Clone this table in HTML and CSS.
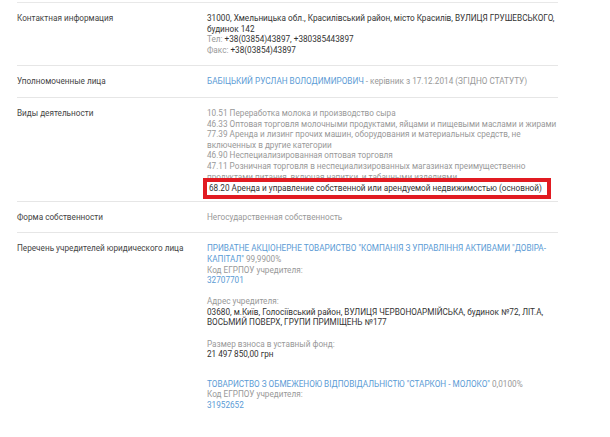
FILE: index.html
```html
<!DOCTYPE html>
<html lang="ru">
<head>
    <meta charset="UTF-8">
    <title>Информация о предприятии</title>
    <link rel="stylesheet" href="styles.css">
</head>
<body>
    <div class="info-table">
        <div class="info-row">
            <div class="info-label">Контактная информация</div>
            <div class="info-value">
                <div class="dark">31000, Хмельницька обл., Красилівський район, місто Красилів, ВУЛИЦЯ ГРУШЕВСЬКОГО, будинок 142</div>
                <div><span class="muted">Тел:</span> <span class="dark">+38(03854)43897, +380385443897</span></div>
                <div><span class="muted">Факс:</span> <span class="dark">+38(03854)43897</span></div>
            </div>
        </div>

        <div class="info-row">
            <div class="info-label">Уполномоченные лица</div>
            <div class="info-value">
                <a class="link" href="#">БАБІЦЬКИЙ РУСЛАН ВОЛОДИМИРОВИЧ</a> <span class="muted">- керівник з 17.12.2014 (ЗГІДНО СТАТУТУ)</span>
            </div>
        </div>

        <div class="info-row activities">
            <div class="info-label">Виды деятельности</div>
            <div class="info-value muted">
                <div>10.51 Переработка молока и производство сыра</div>
                <div>46.33 Оптовая торговля молочными продуктами, яйцами и пищевыми маслами и жирами</div>
                <div>77.39 Аренда и лизинг прочих машин, оборудования и материальных средств, не включенных в другие категории</div>
                <div>46.90 Неспециализированная оптовая торговля</div>
                <div>47.11 Розничная торговля в неспециализированных магазинах преимущественно продуктами питания, включая напитки, и табачными изделиями</div>
                <div class="main-activity">68.20 Аренда и управление собственной или арендуемой недвижимостью (основной)</div>
            </div>
        </div>

        <div class="info-row">
            <div class="info-label">Форма собственности</div>
            <div class="info-value muted">Негосударственная собственность</div>
        </div>

        <div class="info-row">
            <div class="info-label">Перечень учредителей юридического лица</div>
            <div class="info-value">
                <div class="founder">
                    <p><a class="link" href="#">ПРИВАТНЕ АКЦІОНЕРНЕ ТОВАРИСТВО "КОМПАНІЯ З УПРАВЛІННЯ АКТИВАМИ "ДОВІРА-КАПІТАЛ"</a> <span class="muted">99,9900%</span><br>
                    <span class="muted">Код ЕГРПОУ учредителя:</span><br>
                    <a class="link" href="#">32707701</a></p>
                    <p><span class="muted">Адрес учредителя:</span><br>
                    <span class="dark">03680, м.Київ, Голосіївський район, ВУЛИЦЯ ЧЕРВОНОАРМІЙСЬКА, будинок №72, ЛІТ.А, ВОСЬМИЙ ПОВЕРХ, ГРУПИ ПРИМІЩЕНЬ №177</span></p>
                    <p><span class="muted">Размер взноса в уставный фонд:</span><br>
                    <span class="dark">21 497 850,00 грн</span></p>
                </div>
                <div class="founder">
                    <p><a class="link" href="#">ТОВАРИСТВО З ОБМЕЖЕНОЮ ВІДПОВІДАЛЬНІСТЮ "СТАРКОН - МОЛОКО"</a> <span class="muted">0,0100%</span><br>
                    <span class="muted">Код ЕГРПОУ учредителя:</span><br>
                    <a class="link" href="#">31952652</a></p>
                </div>
            </div>
        </div>
    </div>
</body>
</html>
```

FILE: styles.css
```css
body {
    margin: 0;
    background: #fff;
    font-family: Roboto, "Liberation Sans", Arial, sans-serif;
    font-size: 8.2px;
    line-height: 10.6px;
    color: #444;
}
.info-table {
    width: 541px;
    margin: 2px 0 0 17px;
    border-top: 1px solid #e8e8e8;
}
.info-row {
    display: flex;
    padding: 10px 0;
    border-bottom: 1px solid #e6e6e6;
}
.info-row:last-child {
    border-bottom: none;
}
.info-label {
    width: 190px;
    flex-shrink: 0;
    color: #444;
}
.info-value {
    flex: 1;
}
.dark {
    color: #333;
}
.muted {
    color: #999;
}
.link {
    color: #5b9bd5;
    text-decoration: none;
}
.activities {
    padding-bottom: 2px;
}
.main-activity {
    position: relative;
    margin: -4px 0 0 -4px;
    width: 338px;
    padding: 1px 0 1px 2px;
    border: 4px solid #e11b22;
    background: #fff;
    color: #333;
}
.founder p {
    margin: 0 0 10.6px;
}
.founder + .founder {
    margin-top: 19px;
}
```
